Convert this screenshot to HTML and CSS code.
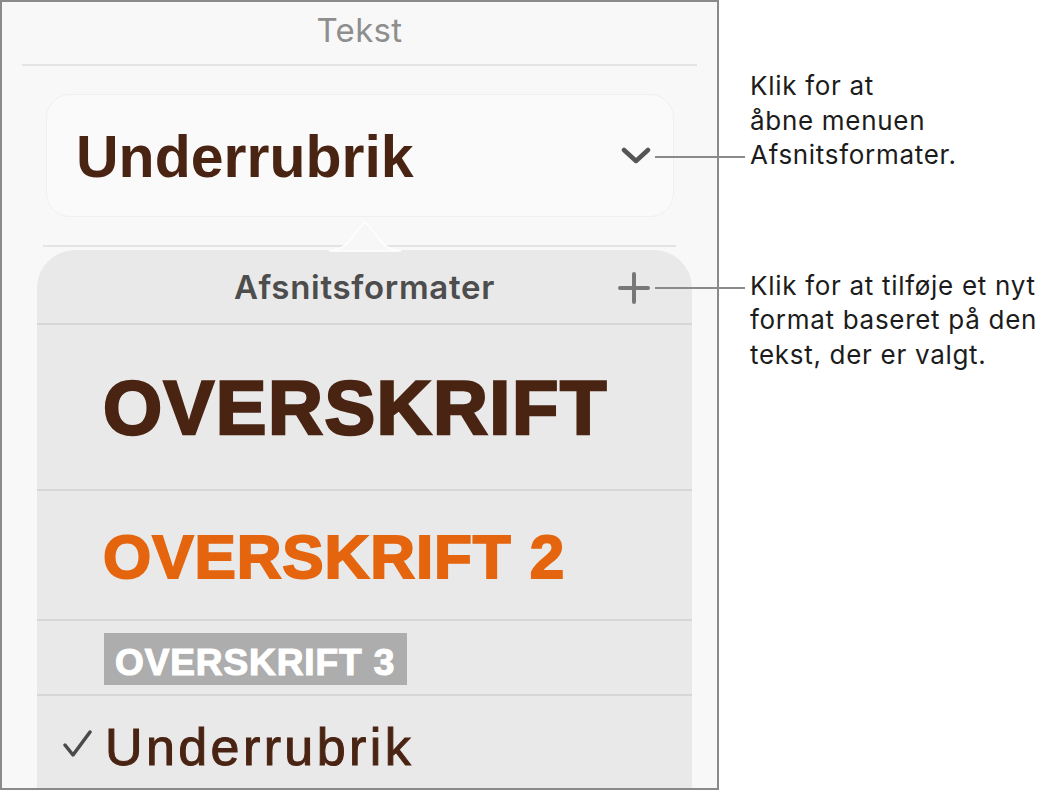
FILE: index.html
```html
<!DOCTYPE html>
<html lang="da">
<head>
  <meta charset="UTF-8">
  <meta name="viewport" content="width=device-width, initial-scale=1.0">
  <title>Tekst – Afsnitsformater</title>
  <link rel="stylesheet" href="styles.css">
</head>
<body>

<div class="page">
  <section class="panel">
    <div class="panel-title">Tekst</div>
    <div class="rule"></div>

    <div class="style-picker">
      <span class="current-style">Underrubrik</span>
      <svg class="chevron" width="30" height="17" viewBox="0 0 30 17">
        <path d="M3 3 L15 14 L27 3" fill="none" stroke="#555" stroke-width="4.5" stroke-linecap="round" stroke-linejoin="round"/>
      </svg>
    </div>
    <div class="rule rule-inset"></div>

    <div class="popover">
      <svg class="popover-arrow" width="72" height="31" viewBox="0 0 72 31">
        <path d="M0 30 C12 30 18 23 26 13 C31 6 34 2 36 2 C38 2 41 6 46 13 C54 23 60 30 72 30 Z" fill="#f7f7f7" stroke="#fff" stroke-width="1.5"/>
      </svg>
      <div class="popover-head">
        <span></span>
        <span class="popover-title">Afsnitsformater</span>
        <svg class="add-style" width="32" height="32" viewBox="0 0 32 32">
          <path d="M16 2 V30 M2 16 H30" fill="none" stroke="#777" stroke-width="4" stroke-linecap="round"/>
        </svg>
      </div>
      <ul class="style-list">
        <li class="style-row row-h1"><span class="h1">OVERSKRIFT</span></li>
        <li class="style-row row-h2"><span class="h2">OVERSKRIFT 2</span></li>
        <li class="style-row row-h3"><span class="h3">OVERSKRIFT 3</span></li>
        <li class="style-row row-sub selected">
          <svg class="check" width="30" height="28" viewBox="0 0 30 28">
            <path d="M3 16 L11 26 L28 3" fill="none" stroke="#4a4a4a" stroke-width="3.5" stroke-linecap="round" stroke-linejoin="round"/>
          </svg>
          <span class="sub">Underrubrik</span>
        </li>
      </ul>
    </div>
  </section>

  <aside class="notes">
    <p class="note note-menu">Klik for at<br>åbne menuen<br>Afsnitsformater.</p>
    <p class="note note-add">Klik for at tilføje et nyt<br>format baseret på den<br>tekst, der er valgt.</p>
  </aside>
</div>

</body>
</html>
```

FILE: styles.css
```css
body {
  margin: 0;
  background-color: #fff;
  font-family: "Liberation Sans", Arial, sans-serif;
}
.page {
  display: flex;
  height: 790px;
  overflow: hidden;
}

/* left side: the text inspector */
.panel {
  flex: none;
  width: 719px;
  height: 790px;
  box-sizing: border-box;
  border: 2px solid #8a8a8a;
  background-color: #f8f8f8;
  overflow: hidden;
}
.panel-title {
  height: 62px;
  box-sizing: border-box;
  padding-top: 12px;
  font-family: Inter, "Liberation Sans", sans-serif;
  font-size: 33px;
  line-height: 1;
  letter-spacing: 0.3px;
  color: #8e8e8e;
  text-align: center;
}
.rule {
  height: 2px;
  margin: 0 20px;
  background-color: #e4e4e4;
}
.rule-inset {
  margin: 0 41px;
}
.style-picker {
  display: flex;
  align-items: center;
  justify-content: space-between;
  height: 123px;
  box-sizing: border-box;
  margin: 28px 43px 28px 44px;
  padding: 4px 22px 0 29px;
  background-color: #fafafa;
  border: 1px solid #f0f0f0;
  border-radius: 24px;
}
.current-style {
  font-size: 59px;
  font-weight: bold;
  line-height: 1;
  color: #4a2413;
}
.chevron {
  margin-top: -4px;
}

/* paragraph styles popover */
.popover {
  position: relative;
  margin: 3px 25px 0 35px;
  height: 600px;
  background-color: #e9e9e9;
  border-radius: 38px 38px 0 0;
}
.popover-arrow {
  position: absolute;
  top: -29px;
  left: 292px;
}
.popover-head {
  display: grid;
  grid-template-columns: 1fr auto 1fr;
  align-items: center;
  height: 73px;
  padding-top: 2px;
  box-sizing: border-box;
}
.popover-title {
  font-family: Inter, "Liberation Sans", sans-serif;
  font-size: 33px;
  font-weight: 600;
  line-height: 1;
  letter-spacing: 0.7px;
  color: #4d4d4d;
}
.add-style {
  justify-self: end;
  margin-right: 42px;
}
.style-list {
  list-style: none;
  margin: 0;
  padding: 0;
}
.style-row {
  border-top: 2px solid #d6d6d6;
  padding-left: 66px;
  box-sizing: border-box;
  line-height: 1;
  font-weight: bold;
}
.row-h1 {
  height: 166px;
  padding-top: 45px;
}
.row-h2 {
  height: 130px;
  padding-top: 35px;
}
.row-h3 {
  height: 75px;
  padding-top: 12px;
  padding-left: 67px;
}
.row-sub {
  display: flex;
  align-items: flex-start;
  padding-left: 25px;
  padding-top: 25px;
  height: 120px;
}
.h1 {
  font-size: 76px;
  letter-spacing: 1.5px;
  color: #4a2413;
  -webkit-text-stroke: 2.5px #4a2413;
}
.h2 {
  font-size: 62px;
  letter-spacing: 0.9px;
  color: #e5650f;
  -webkit-text-stroke: 2px #e5650f;
}
.h3 {
  display: inline-block;
  padding: 11px 12px 4px 11px;
  font-size: 37px;
  letter-spacing: 0.9px;
  color: #fff;
  background-color: #adadad;
  -webkit-text-stroke: 1.2px #fff;
}
.check {
  margin-top: 8px;
  margin-right: 13px;
}
.sub {
  font-size: 52px;
  font-weight: normal;
  letter-spacing: 3.4px;
  color: #4a2413;
  -webkit-text-stroke: 1px #4a2413;
}

/* callouts on the right */
.notes {
  padding-left: 31px;
}
.note {
  position: relative;
  margin: 0;
  font-family: Inter, "Liberation Sans", sans-serif;
  font-size: 26px;
  line-height: 34.5px;
  letter-spacing: 0.7px;
  color: #1c1c1c;
}
.note::before {
  content: "";
  position: absolute;
  left: -95px;
  width: 90px;
  height: 2px;
  background-color: #8a8a8a;
}
.note-menu {
  margin-top: 69px;
}
.note-menu::before {
  top: 87px;
}
.note-add {
  margin-top: 96px;
}
.note-add::before {
  top: 18px;
}
```
